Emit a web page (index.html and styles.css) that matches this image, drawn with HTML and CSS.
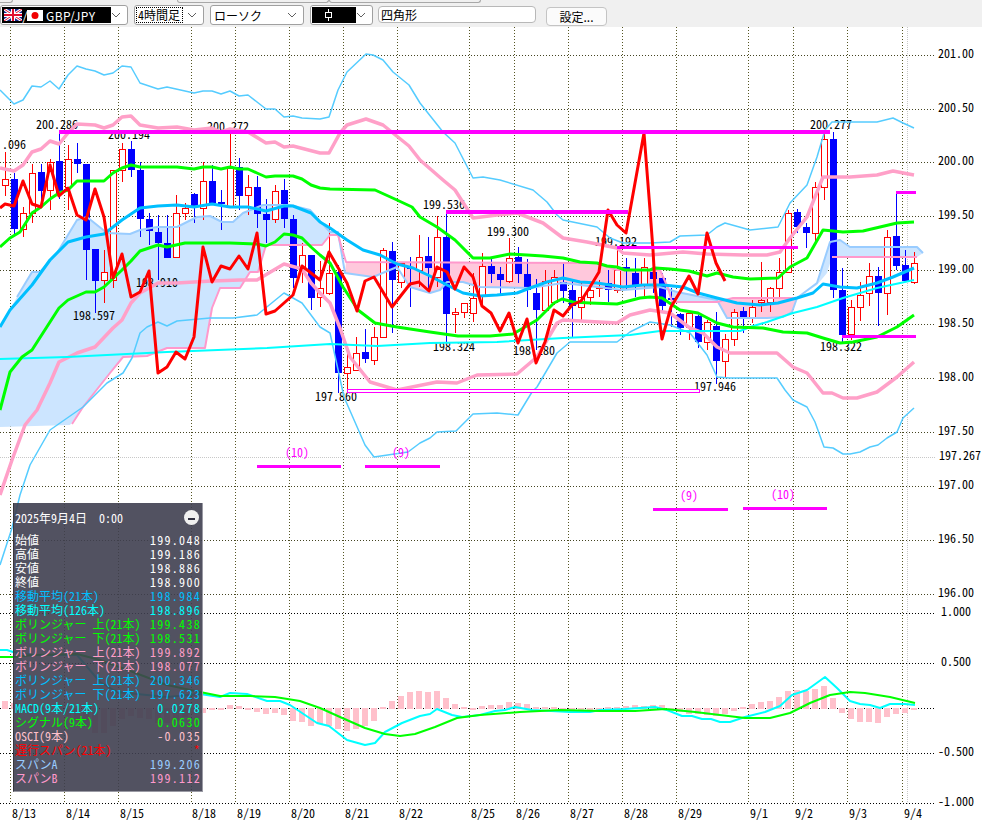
FILE: index.html
```html
<!DOCTYPE html>
<html lang="ja">
<head>
  <meta charset="UTF-8">
  <title>GBP/JPY 4時間足</title>
  <link rel="stylesheet" href="styles.css">
</head>
<body>
  <div class="toolbar">
    <div class="tab-corner"></div>
    <div class="tab-strip">
      <div class="tab"></div>
      <div class="tab"></div>
    </div>
    <div class="combo combo-pair">
      <div class="selection">
        <svg class="flag" width="18" height="12" viewBox="0 0 18 12">
          <rect width="18" height="12" fill="#1a2a8c"/>
          <path d="M0 0L18 12M18 0L0 12" stroke="#fff" stroke-width="3"/>
          <path d="M0 0L18 12M18 0L0 12" stroke="#e01030" stroke-width="1"/>
          <path d="M9 0V12M0 6H18" stroke="#fff" stroke-width="4"/>
          <path d="M9 0V12M0 6H18" stroke="#e01030" stroke-width="2"/>
        </svg>
        <span class="slash">/</span>
        <svg class="flag" width="16" height="11" viewBox="0 0 16 11">
          <rect width="16" height="11" fill="#fff"/>
          <circle cx="8" cy="5.5" r="3.5" fill="#f00000"/>
        </svg>
        <span class="pair-name">GBP/JPY</span>
      </div>
      <svg class="chevron" width="10" height="6" viewBox="0 0 10 6"><path d="M1 1L5 5L9 1"/></svg>
    </div>
    <div class="combo combo-period">
      <span class="focus">4時間足</span>
      <svg class="chevron" width="10" height="6" viewBox="0 0 10 6"><path d="M1 1L5 5L9 1"/></svg>
    </div>
    <div class="combo combo-type">
      <span class="plain">ローソク</span>
      <svg class="chevron" width="10" height="6" viewBox="0 0 10 6"><path d="M1 1L5 5L9 1"/></svg>
    </div>
    <div class="combo combo-icon">
      <div class="selection">
        <svg class="candle-icon" width="7" height="12" viewBox="0 0 7 12"><path d="M3.5 0V3M3.5 9V12" stroke="#fff"/><rect x=".5" y="3.5" width="6" height="5" fill="none" stroke="#fff"/></svg>
      </div>
      <svg class="chevron" width="10" height="6" viewBox="0 0 10 6"><path d="M1 1L5 5L9 1"/></svg>
    </div>
    <div class="text-box">四角形</div>
    <button class="setting-btn">設定...</button>
  </div>

  <div class="chart-area">
    <svg id="chart" class="chart" width="982" height="794" viewBox="0 27 982 794">
      <g id="grid"></g>

      <polygon class="cloud-up" points="0,327 17,297 32,272 40,272 57,253 77,220 87,217 107,233 130,234 140,230 157,227 177,227 197,217 210,216 222,222 233,222 243,213 263,205 290,205 310,210 330,232 338,232 345,262 338,235 330,235 322,245 266,245 258,272 250,272 240,288 220,288 212,308 205,348 167,348 147,356 123,357 110,373 83,407 70,425 0,427"/>
      <polygon class="cloud-down" points="346,262 597,263 617,270 660,270 668,288 660,287 623,290 563,283 530,288 480,287 463,282 447,282 440,290 430,293 410,287 397,267 373,277 345,273"/>
      <polygon class="cloud-up" points="668,288 677,292 717,300 717,302 672,302"/>
      <polygon class="cloud-down" points="717,302 733,298 797,298 792,312 783,317 767,318 727,318"/>
      <polygon class="cloud-up" points="797,298 817,283 830,242 840,240 850,247 917,247 923,253 917,257 832,257 827,273 817,285"/>

      <g id="histogram"></g>
      <g id="candles"></g>

      <g class="price-note">
        <text x="2" y="149">.096</text>
        <text x="36" y="129">200.286</text>
        <text x="108" y="139">200.194</text>
        <text x="207" y="131">200.272</text>
        <text x="73" y="320">198.597</text>
        <text x="136" y="287">198.910</text>
        <text x="315" y="401">197.860</text>
        <text x="423" y="209">199.536</text>
        <text x="487" y="236">199.300</text>
        <text x="595" y="246">199.192</text>
        <text x="433" y="351">198.324</text>
        <text x="513" y="355">198.280</text>
        <text x="694" y="391">197.946</text>
        <text x="810" y="129">200.277</text>
        <text x="820" y="351">198.322</text>
      </g>

      <polyline class="span-a" points="17,297 32,272 40,272 57,253 77,220 87,217 107,233 130,234 140,230 157,227 177,227 197,217 210,216 222,222 233,222 243,213 263,205 290,205 310,210 330,232 338,232 345,273 373,277 397,267 410,287 430,293 440,290 447,282 463,282 480,287 530,288 563,283 623,290 660,287 677,292 717,300 727,318 767,318 783,317 792,312 797,298 817,283 830,242 840,240 850,247 917,247 923,253"/>
      <polyline class="span-b" points="72,424 83,407 110,373 123,357 147,356 167,348 205,348 212,308 220,288 240,288 250,272 258,272 266,245 322,245 330,235 338,235 346,262 597,263 617,270 660,270 668,288 672,302 717,302 733,298 797,298"/>
      <polyline class="span-b" points="832,257 917,257"/>

      <polyline class="band3" points="0,90 14,104 23,100 32,86 41,87 50,81 59,89 68,75 77,66 86,69 95,71 104,75 113,73 122,66 131,67 140,83 158,89 167,87 185,91 194,93 203,91 212,91 221,94 230,91 239,96 248,95 266,109 275,109 284,117 293,116 302,118 320,119 329,117 338,90 347,72 366,54 373,55 383,60 393,72 409,85 420,103 443,132 455,143 473,178 483,177 500,180 533,190 547,202 557,215 563,220 597,227 610,238 623,243 650,243 670,242 680,236 707,235 717,227 725,223 750,230 778,227 790,203 807,185 817,157 825,130 832,122 877,122 893,118 903,123 914,128"/>
      <polyline class="band3" points="0,565 12,528 20,495 30,465 50,430 83,407 107,383 123,373 132,358 140,333 147,327 158,322 167,326 177,321 210,318 233,318 257,315 284,293 293,298 302,303 320,327 330,333 344,397 365,445 374,457 408,452 420,443 430,438 437,432 456,431 473,414 497,413 518,415 532,392 537,387 557,353 570,342 617,342 630,332 650,322 670,325 690,333 707,355 717,377 730,378 777,378 785,390 793,400 807,407 815,422 824,447 833,448 843,454 850,454 860,452 870,447 878,445 887,438 897,432 903,418 914,408"/>

      <polyline class="band2" points="0,168 14,171 23,165 32,152 41,149 50,141 59,144 68,133 77,124 95,125 104,128 113,125 122,117 131,116 140,125 158,128 177,127 194,130 212,128 221,132 230,129 248,132 266,143 275,142 284,147 293,146 320,153 329,153 340,133 347,125 366,119 383,125 409,146 420,160 443,180 455,190 473,218 497,215 517,213 543,223 563,238 587,242 617,248 623,253 650,255 683,252 707,254 743,255 767,255 780,252 790,238 807,217 823,177 850,177 877,175 893,171 914,175"/>
      <polyline class="band2" points="0,495 12,460 25,425 37,410 50,383 59,362 77,353 95,347 113,328 122,320 131,303 140,293 158,283 177,283 194,282 212,281 240,280 257,280 284,264 302,269 311,283 320,293 330,303 340,328 350,357 370,382 397,390 437,382 457,383 477,375 517,374 537,357 557,323 563,320 617,323 630,315 650,310 670,313 690,328 703,333 717,347 730,353 777,353 793,367 807,373 823,393 832,393 843,398 857,398 877,392 897,377 914,362"/>

      <polyline class="ma-long" points="0,359 67,357 167,352 267,348 330,344 377,346 430,343 497,342 563,338 630,335 660,331 683,331 740,331 750,327 767,322 793,313 817,307 843,298 877,288 914,280"/>
      <polyline class="band1" points="0,247 10,238 20,232 32,213 41,207 50,199 59,193 68,190 77,181 95,181 104,181 113,173 122,168 131,165 140,167 158,167 177,167 194,169 203,167 212,167 221,169 230,167 239,169 248,169 257,173 266,177 275,176 293,176 302,179 311,185 320,188 330,189 375,190 397,200 412,207 420,217 437,227 455,240 473,258 490,258 510,254 527,255 543,256 563,258 580,262 597,263 607,266 617,267 625,270 642,270 650,270 655,268 670,269 689,271 707,276 717,273 733,277 750,279 778,278 790,267 807,258 823,230 843,232 863,231 880,227 897,223 914,222"/>
      <polyline class="band1" points="0,410 10,372 22,357 32,350 59,308 68,300 86,292 95,292 104,287 122,270 131,261 140,251 158,245 167,247 185,243 203,243 212,243 230,243 257,244 266,246 275,242 284,234 293,235 302,238 311,247 320,255 330,263 343,287 358,310 375,323 397,327 430,332 458,336 490,336 513,334 537,320 554,303 562,299 573,302 590,303 617,304 640,298 650,297 662,298 680,310 698,313 717,323 733,327 763,328 783,332 807,333 823,338 840,343 853,342 877,337 897,327 914,315"/>
      <polyline class="ma-short" points="0,327 10,310 32,285 50,260 68,242 86,237 104,234 122,220 140,208 158,206 177,205 194,207 212,204 230,207 248,207 266,211 284,206 293,206 311,213 320,222 330,228 347,240 363,250 380,255 397,264 413,268 430,276 447,285 463,293 480,296 497,295 517,293 530,288 547,282 563,278 580,282 597,283 623,287 643,285 663,285 683,287 698,293 717,298 737,303 760,305 778,303 797,298 813,293 823,284 840,287 857,288 877,283 893,277 914,268"/>
      <polyline class="lagging" points="0,208 5,204 14,206 23,181 32,204 41,207 50,165 59,196 68,188 77,215 86,220 95,189 104,217 113,278 122,254 131,297 140,292 149,271 158,373 167,367 176,352 185,359 194,337 203,247 212,282 221,266 230,269 239,256 248,269 257,233 266,314 275,311 284,303 293,295 302,266 311,273 320,280 329,252 347,283 357,311 365,281 374,277 392,307 410,284 419,282 429,291 437,267 447,272 455,289 464,267 473,277 482,306 491,313 500,331 509,313 518,343 527,319 536,363 545,342 554,310 563,316 572,305 581,301 590,287 599,272 608,210 617,225 626,233 644,133 650,210 653,250 655,287 662,339 671,307 680,292 689,276 698,294 707,233 716,263 725,281"/>

      <line class="mark-thick" x1="59" y1="132" x2="830" y2="132"/>
      <line class="mark-thick" x1="446" y1="212" x2="628" y2="212"/>
      <line class="mark-thin" x1="617" y1="247" x2="798" y2="247"/>
      <line class="mark-thin" x1="842" y1="336" x2="916" y2="336"/>
      <line class="mark-thin" x1="896" y1="192" x2="916" y2="192"/>
      <rect class="mark-box" x="347.5" y="389.5" width="352" height="3"/>
      <line class="mark-count" x1="257" y1="466" x2="341" y2="466"/>
      <line class="mark-count" x1="365" y1="466" x2="440" y2="466"/>
      <line class="mark-count" x1="653" y1="509" x2="728" y2="509"/>
      <line class="mark-count" x1="743" y1="508" x2="827" y2="508"/>
      <g class="count-note">
        <text x="297" y="457">(10)</text>
        <text x="401" y="457">(9)</text>
        <text x="689" y="500">(9)</text>
        <text x="783" y="499">(10)</text>
      </g>

      <g class="axis-text">
        <text x="938" y="58">201.00</text>
        <text x="938" y="112">200.50</text>
        <text x="938" y="165">200.00</text>
        <text x="938" y="219">199.50</text>
        <text x="938" y="273">199.00</text>
        <text x="938" y="327">198.50</text>
        <text x="938" y="381">198.00</text>
        <text x="938" y="435">197.50</text>
        <text x="939" y="460">197.267</text>
        <text x="938" y="489">197.00</text>
        <text x="938" y="543">196.50</text>
        <text x="938" y="597">196.00</text>
        <text x="941" y="616">1.000</text>
        <text x="941" y="666">0.500</text>
        <text x="938" y="756">-0.500</text>
        <text x="938" y="806">-1.000</text>
      </g>
      <g class="date-text">
        <text x="24" y="818">8/13</text>
        <text x="78" y="818">8/14</text>
        <text x="132" y="818">8/15</text>
        <text x="204" y="818">8/18</text>
        <text x="249" y="818">8/19</text>
        <text x="303" y="818">8/20</text>
        <text x="357" y="818">8/21</text>
        <text x="411" y="818">8/22</text>
        <text x="483" y="818">8/25</text>
        <text x="528" y="818">8/26</text>
        <text x="582" y="818">8/27</text>
        <text x="636" y="818">8/28</text>
        <text x="690" y="818">8/29</text>
        <text x="759" y="818">9/1</text>
        <text x="804" y="818">9/2</text>
        <text x="858" y="818">9/3</text>
        <text x="913" y="818">9/4</text>
      </g>

      <polyline class="macd" points="0,650 7,650 13,652 33,655 77,655 100,682 117,692 167,697 200,694 220,697 230,693 247,694 267,701 280,701 290,705 302,713 317,723 329,726 347,740 365,745 375,743 385,732 402,723 420,716 430,714 437,709 452,715 462,717 480,715 495,711 505,710 515,707 532,710 570,712 590,712 600,710 625,709 655,707 667,710 682,716 692,716 702,719 711,719 720,722 730,722 745,717 765,712 780,706 792,695 807,690 825,677 837,688 850,701 860,704 870,705 880,708 890,704 905,704 915,705"/>
      <polyline class="signal" points="0,657 13,657 33,655 77,654 100,660 133,672 167,685 200,692 220,696 250,696 275,697 300,701 320,708 340,717 365,728 385,734 400,736 415,734 435,727 457,718 480,715 520,712 560,710 600,711 635,711 665,709 695,712 720,715 745,718 770,718 790,713 810,703 830,695 850,692 865,693 890,697 915,703"/>
    </svg>

    <div class="info-panel">
      <div class="info-head">
        <span>2025年9月4日&nbsp;&nbsp;0:00</span>
        <span class="minus-btn"></span>
      </div>
      <div class="info-row c-white"><span>始値</span><span class="val">199.048</span></div>
      <div class="info-row c-white"><span>高値</span><span class="val">199.186</span></div>
      <div class="info-row c-white"><span>安値</span><span class="val">198.886</span></div>
      <div class="info-row c-white"><span>終値</span><span class="val">198.900</span></div>
      <div class="info-row c-sky"><span>移動平均(21本)</span><span class="val">198.984</span></div>
      <div class="info-row c-cyan"><span>移動平均(126本)</span><span class="val">198.896</span></div>
      <div class="info-row c-green"><span>ボリンジャー 上(21本)</span><span class="val">199.438</span></div>
      <div class="info-row c-green"><span>ボリンジャー 下(21本)</span><span class="val">198.531</span></div>
      <div class="info-row c-pink"><span>ボリンジャー 上(21本)</span><span class="val">199.892</span></div>
      <div class="info-row c-pink"><span>ボリンジャー 下(21本)</span><span class="val">198.077</span></div>
      <div class="info-row c-sky"><span>ボリンジャー 上(21本)</span><span class="val">200.346</span></div>
      <div class="info-row c-sky"><span>ボリンジャー 下(21本)</span><span class="val">197.623</span></div>
      <div class="info-row c-cyan"><span>MACD(9本/21本)</span><span class="val">0.0278</span></div>
      <div class="info-row c-green"><span>シグナル(9本)</span><span class="val">0.0630</span></div>
      <div class="info-row c-rose"><span>OSCI(9本)</span><span class="val">-0.035</span></div>
      <div class="info-row c-red"><span>遅行スパン(21本)</span><span class="val">*</span></div>
      <div class="info-row c-blue"><span>スパンA</span><span class="val">199.206</span></div>
      <div class="info-row c-hotpink"><span>スパンB</span><span class="val">199.112</span></div>
    </div>
  </div>

  <script src="chart.js"></script>
</body>
</html>
```

FILE: styles.css
```css
* {
  margin: 0;
  padding: 0;
  box-sizing: border-box;
}

body {
  width: 982px;
  height: 821px;
  overflow: hidden;
  background-color: white;
  color: black;
  font-family: "Noto Sans CJK JP", "Liberation Sans", sans-serif;
  font-size: 12px;
  font-feature-settings: "hwid";
}

.toolbar {
  position: relative;
  display: flex;
  align-items: flex-start;
  gap: 6px;
  height: 27px;
  padding-top: 5px;
  background-color: #f0f0f0;
}

.tab-corner {
  position: absolute;
  top: 0;
  left: 0;
  width: 13px;
  height: 3px;
  border-right: 1px solid #a8a8a8;
  border-bottom: 1px solid #a8a8a8;
  border-radius: 0 0 3px 0;
}

.tab-strip {
  position: absolute;
  top: 0;
  left: 177px;
  display: flex;
}

.tab {
  width: 152px;
  height: 3px;
  border: 1px solid #a8a8a8;
  border-top: none;
  border-radius: 0 0 3px 3px;
}

.combo {
  display: flex;
  align-items: center;
  justify-content: space-between;
  height: 20px;
  padding: 1px 6px 1px 2px;
  background-color: white;
  border: 1px solid #a0a0a0;
  border-radius: 3px;
}

.combo-pair { width: 128px; padding-left: 1px; }
.combo-period { width: 70px; }
.combo-type { width: 94px; }
.combo-icon { width: 63px; padding-left: 1px; }

.chevron {
  flex-shrink: 0;
  fill: none;
  stroke: #606060;
  stroke-width: 1;
}

.selection {
  display: flex;
  align-items: center;
  height: 16px;
  background-color: black;
  color: white;
}

.combo-pair .selection {
  width: 109px;
  padding-left: 2px;
}

.combo-icon .selection {
  width: 44px;
  justify-content: center;
  padding-right: 12px;
}

.slash {
  width: 5px;
  text-align: center;
}

.pair-name {
  margin-left: 3px;
  font-feature-settings: normal;
  letter-spacing: 0.4px;
}

.focus {
  padding: 0 2px 0 1px;
  line-height: 14px;
  outline: 1px dotted black;
}

.plain {
  padding-left: 1px;
}

.text-box {
  width: 158px;
  height: 17px;
  margin-left: -1px;
  margin-top: 1px;
  padding-left: 2px;
  line-height: 15px;
  background-color: white;
  border: 1px solid #b8b8b8;
  border-radius: 4px;
}

.setting-btn {
  width: 61px;
  height: 19px;
  margin-left: 4px;
  margin-top: 2px;
  font: inherit;
  font-feature-settings: normal;
  line-height: 16px;
  background-color: #fbfbfb;
  border: 1px solid #c4c4c4;
  border-radius: 4px;
}

.chart-area {
  position: relative;
  width: 982px;
  height: 794px;
  background-color: white;
}

.chart {
  display: block;
}

/* grid */
.grid-v { stroke: #555522; stroke-dasharray: 1 2; shape-rendering: crispEdges; }
.grid-h { stroke: #444422; stroke-dasharray: 1 2; shape-rendering: crispEdges; }
.grid-macd { stroke: black; stroke-dasharray: 1 2; shape-rendering: crispEdges; }
.crosshair { stroke: #c8c8c8; stroke-dasharray: 1 1; shape-rendering: crispEdges; }

/* candles */
.wick-up { stroke: #ff0000; shape-rendering: crispEdges; }
.wick-down { stroke: #0000ff; shape-rendering: crispEdges; }
.body-up { fill: white; stroke: #ff0000; shape-rendering: crispEdges; }
.body-down { fill: #0000ff; shape-rendering: crispEdges; }
.hist-bar { fill: #ffc0cb; shape-rendering: crispEdges; }

/* ichimoku cloud */
.cloud-up { fill: #cce5ff; }
.cloud-down { fill: #ffc8dc; }
.span-a, .span-b, .band1, .band2, .band3, .ma-long, .ma-short, .lagging, .macd, .signal {
  fill: none;
  stroke-linejoin: round;
}
.span-a { stroke: #99ccff; stroke-width: 2; }
.span-b { stroke: #ff99cc; stroke-width: 2; }

/* indicator lines */
.band1 { stroke: #00ff00; stroke-width: 3; }
.band2 { stroke: #ffa0c8; stroke-width: 3.5; }
.band3 { stroke: #55ccff; stroke-width: 1.5; }
.ma-long { stroke: #00ffff; stroke-width: 2; }
.ma-short { stroke: #00bfff; stroke-width: 3; }
.lagging { stroke: #ff0000; stroke-width: 3; }
.macd { stroke: #00ffff; stroke-width: 2; }
.signal { stroke: #00ff00; stroke-width: 2; }

/* drawn marks */
.mark-thick { stroke: #ff00ff; stroke-width: 4; shape-rendering: crispEdges; }
.mark-thin { stroke: #ff00ff; stroke-width: 3; shape-rendering: crispEdges; }
.mark-box { fill: white; stroke: #ff00ff; shape-rendering: crispEdges; }
.mark-count { stroke: #ff00ff; stroke-width: 3; shape-rendering: crispEdges; }

.price-note text, .axis-text text {
  fill: black;
  font-size: 12px;
}

.count-note text {
  fill: #ff00ff;
  font-size: 12px;
  text-anchor: middle;
}

.date-text text {
  fill: black;
  font-size: 12px;
  text-anchor: middle;
}

/* floating values panel */
.info-panel {
  position: absolute;
  top: 476px;
  left: 13px;
  width: 190px;
  height: 289px;
  padding: 0 1px 0 1px;
  background-color: rgba(63, 63, 80, 0.9);
  border-left: 1px solid #38383f;
  border-right: 1px solid #9a9aa4;
  border-bottom: 1px solid #9a9aa4;
}

.info-head {
  display: flex;
  align-items: center;
  justify-content: space-between;
  height: 30px;
  padding-bottom: 12px;
  padding-top: 10px;
  color: white;
}

.minus-btn {
  position: relative;
  width: 15px;
  height: 15px;
  margin-right: 2px;
  background-color: #f0f0f0;
  border-radius: 50%;
}

.minus-btn::after {
  content: "";
  position: absolute;
  top: 8px;
  left: 4px;
  width: 7px;
  height: 2px;
  background-color: #303040;
}

.info-row {
  display: flex;
  justify-content: space-between;
  height: 14px;
  line-height: 14px;
  white-space: nowrap;
}

.val {
  letter-spacing: 1.3px;
}

.c-white { color: white; }
.c-sky { color: #00bfff; }
.c-cyan { color: #00ffff; }
.c-green { color: #00ff00; }
.c-pink { color: #ff9ec8; }
.c-rose { color: #ffc0cb; }
.c-red { color: #ff0000; }
.c-blue { color: #99ccff; }
.c-hotpink { color: #ff99cc; }
```

FILE: chart.js
```js
var NS = 'http://www.w3.org/2000/svg';

function add(parentId, tag, attrs) {
  var el = document.createElementNS(NS, tag);
  for (var k in attrs) el.setAttribute(k, attrs[k]);
  document.getElementById(parentId).appendChild(el);
}

// grid
var vLines = [10, 64, 118, 191, 235, 289, 343, 397, 469, 514, 568, 622, 676, 748, 793, 847, 902];
var priceLines = [55, 109, 162, 216, 270, 324, 378, 432, 486, 540, 594];
var macdLines = [613, 663, 708, 753, 803];

vLines.forEach(function (x) {
  add('grid', 'line', { 'class': 'grid-v', x1: x + .5, y1: 27, x2: x + .5, y2: 804 });
});
priceLines.forEach(function (y) {
  add('grid', 'line', { 'class': 'grid-h', x1: 0, y1: y + .5, x2: 936, y2: y + .5 });
});
macdLines.forEach(function (y) {
  add('grid', 'line', { 'class': 'grid-macd', x1: 0, y1: y + .5, x2: 936, y2: y + .5 });
});
add('grid', 'line', { 'class': 'crosshair', x1: 907.5, y1: 27, x2: 907.5, y2: 804 });
add('grid', 'line', { 'class': 'crosshair', x1: 0, y1: 457.5, x2: 936, y2: 457.5 });

// bars are 9px apart starting at x=5: [high, body top, body bottom, low, up?]
var bars = [
  [152,179,185,196,1],[173,179,228,235,0],[207,213,229,237,1],[164,173,213,223,1],[164,172,190,200,0],
  [159,162,190,210,1],[132,161,193,199,0],[145,159,187,210,1],[143,159,163,173,0],[164,164,249,280,0],
  [249,249,280,313,0],[250,272,280,303,1],[170,170,280,288,1],[143,149,170,182,1],[141,149,169,177,0],
  [162,170,218,237,0],[213,219,230,245,0],[215,232,242,280,0],[215,243,257,258,0],[195,213,257,257,1],
  [203,208,213,220,1],[193,194,205,223,0],[162,181,208,220,1],[165,181,202,205,0],[190,202,203,230,0],
  [133,168,207,207,1],[158,167,195,210,0],[175,187,195,215,1],[176,187,213,228,0],[199,214,219,243,0],
  [185,191,219,223,1],[179,190,218,228,0],[215,219,277,288,0],[243,255,267,283,1],[255,255,297,310,0],
  [261,288,297,307,1],[223,273,293,295,1],[265,272,372,393,0],[353,367,373,391,1],[337,353,370,370,1],
  [329,352,358,363,0],[327,337,360,365,1],[248,250,337,337,1],[242,251,279,333,0],[263,263,282,288,1],
  [257,267,268,307,0],[235,257,270,287,1],[237,256,267,290,0],[216,237,277,287,1],[212,237,313,343,0],
  [308,312,314,333,1],[303,303,312,318,1],[273,298,313,322,1],[253,266,295,308,1],[259,266,273,283,0],
  [267,274,279,295,0],[238,258,281,283,1],[247,257,273,283,0],[259,274,289,307,0],[279,293,309,350,0],
  [270,281,310,312,1],[270,277,302,305,1],[263,282,290,303,0],[279,290,305,338,0],[283,297,307,320,1],
  [283,290,297,305,1],[280,287,288,297,1],[270,283,289,302,0],[250,270,290,293,1],[258,267,270,290,0],
  [258,273,284,297,0],[258,267,284,297,1],[262,272,278,293,0],[273,278,305,313,0],[288,298,299,327,0],
  [313,314,327,335,0],[312,313,327,340,1],[315,316,341,348,0],[320,322,342,350,1],[312,326,360,384,0],
  [334,339,361,377,1],[309,312,339,346,1],[307,311,316,333,0],[300,307,318,323,1],[262,300,302,312,1],
  [287,288,302,312,1],[258,272,288,298,1],[210,213,272,272,1],[209,212,226,233,0],[223,227,232,248,0],
  [182,187,233,243,1],[130,139,187,200,1],[132,139,289,298,0],[268,290,334,343,0],[300,307,334,340,1],
  [282,295,307,321,1],[263,276,293,306,1],[267,276,292,326,0],[230,237,293,315,1],[192,236,265,270,0],
  [250,265,280,282,0],[252,263,282,284,1]
];

// MACD histogram, far end of each bar in page px; zero line is y=708
var hist = [
  701,703,705,706,707,709,711,715,720,726,732,732,725,718,715,717,718,722,722,720,
  716,713,712,709,709,705,706,709,711,713,712,714,720,721,725,723,725,728,730,728,
  725,720,707,701,696,692,691,692,691,698,704,707,709,706,705,705,702,703,704,707,
  707,707,709,710,711,711,709,707,707,706,705,706,705,705,709,711,713,713,714,715,
  713,710,707,704,702,701,697,691,690,691,689,686,698,712,718,721,721,722,716,713,
  712,709
];

bars.forEach(function (b, i) {
  var x = 5 + 9 * i;
  add('candles', 'line', { 'class': b[4] ? 'wick-up' : 'wick-down', x1: x + .5, y1: b[0], x2: x + .5, y2: b[3] });
  if (b[4]) {
    add('candles', 'rect', { 'class': 'body-up', x: x - 2.5, y: b[1] + .5, width: 6, height: b[2] - b[1] });
  } else {
    add('candles', 'rect', { 'class': 'body-down', x: x - 3, y: b[1], width: 7, height: b[2] - b[1] + 1 });
  }
});

hist.forEach(function (y, i) {
  var x = 5 + 9 * i;
  add('histogram', 'rect', {
    'class': 'hist-bar',
    x: x - 3,
    y: Math.min(y, 708),
    width: 6,
    height: Math.max(Math.abs(y - 708), 1) + 1
  });
});
```
